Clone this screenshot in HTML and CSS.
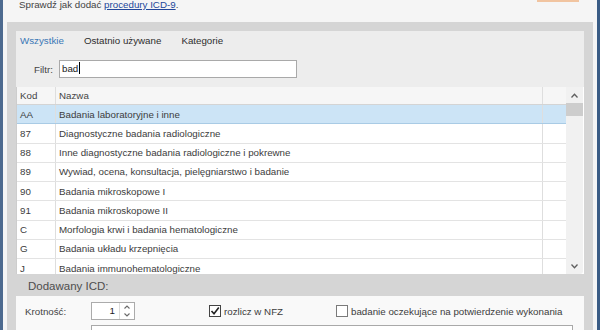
FILE: index.html
```html
<!DOCTYPE html>
<html lang="pl">
<head>
    <meta charset="UTF-8">
    <meta name="viewport" content="width=device-width, initial-scale=1.0">
    <title>Dodaj procedurę ICD-9</title>
    <link rel="stylesheet" href="styles.css">
</head>
<body>
    <div class="window">
        <div class="topbar">
            <p class="hint">Sprawdź jak dodać <a href="#">procedury ICD-9</a>.</p>
            <div class="top-button"></div>
        </div>

        <div class="frame">
            <div class="search">
                <div class="tabs">
                    <span class="tab active">Wszystkie</span>
                    <span class="tab">Ostatnio używane</span>
                    <span class="tab">Kategorie</span>
                </div>
                <div class="filter">
                    <label>Filtr:</label>
                    <div class="textbox">bad<span class="caret"></span></div>
                </div>
            </div>

            <div class="grid">
                <div class="grid-body">
                    <div class="row header">
                        <div class="cell kod">Kod</div>
                        <div class="cell nazwa">Nazwa</div>
                        <div class="cell extra"></div>
                    </div>
                    <div class="row selected">
                        <div class="cell kod">AA</div>
                        <div class="cell nazwa">Badania laboratoryjne i inne</div>
                        <div class="cell extra"></div>
                    </div>
                    <div class="row">
                        <div class="cell kod">87</div>
                        <div class="cell nazwa">Diagnostyczne badania radiologiczne</div>
                        <div class="cell extra"></div>
                    </div>
                    <div class="row">
                        <div class="cell kod">88</div>
                        <div class="cell nazwa">Inne diagnostyczne badania radiologiczne i pokrewne</div>
                        <div class="cell extra"></div>
                    </div>
                    <div class="row">
                        <div class="cell kod">89</div>
                        <div class="cell nazwa">Wywiad, ocena, konsultacja, pielęgniarstwo i badanie</div>
                        <div class="cell extra"></div>
                    </div>
                    <div class="row">
                        <div class="cell kod">90</div>
                        <div class="cell nazwa">Badania mikroskopowe I</div>
                        <div class="cell extra"></div>
                    </div>
                    <div class="row">
                        <div class="cell kod">91</div>
                        <div class="cell nazwa">Badania mikroskopowe II</div>
                        <div class="cell extra"></div>
                    </div>
                    <div class="row">
                        <div class="cell kod">C</div>
                        <div class="cell nazwa">Morfologia krwi i badania hematologiczne</div>
                        <div class="cell extra"></div>
                    </div>
                    <div class="row">
                        <div class="cell kod">G</div>
                        <div class="cell nazwa">Badania układu krzepnięcia</div>
                        <div class="cell extra"></div>
                    </div>
                    <div class="row">
                        <div class="cell kod">J</div>
                        <div class="cell nazwa">Badania immunohematologiczne</div>
                        <div class="cell extra"></div>
                    </div>
                </div>
                <div class="scrollbar">
                    <div class="sb-arrow">
                        <svg width="7" height="5" viewBox="0 0 7 5"><polyline points="0.5,4.5 3.5,1.2 6.5,4.5" fill="none" stroke="#5f5f5f" stroke-width="1.3"/></svg>
                    </div>
                    <div class="sb-track"><div class="sb-thumb"></div></div>
                    <div class="sb-arrow">
                        <svg width="7" height="5" viewBox="0 0 7 5"><polyline points="0.5,0.5 3.5,3.8 6.5,0.5" fill="none" stroke="#5f5f5f" stroke-width="1.3"/></svg>
                    </div>
                </div>
            </div>

            <div class="section-title">Dodawany ICD:</div>

            <div class="panel">
                <div class="panel-row">
                    <label class="field-label">Krotność:</label>
                    <div class="spinner">
                        <span class="spin-value">1</span>
                        <span class="spin-buttons">
                            <svg width="6" height="4" viewBox="0 0 6 4"><polyline points="0.5,3.5 3,1 5.5,3.5" fill="none" stroke="#6a6a6a" stroke-width="1.1"/></svg>
                            <svg width="6" height="4" viewBox="0 0 6 4"><polyline points="0.5,0.5 3,3 5.5,0.5" fill="none" stroke="#6a6a6a" stroke-width="1.1"/></svg>
                        </span>
                    </div>
                    <label class="check nfz">
                        <span class="box checked">
                            <svg width="10" height="10" viewBox="0 0 10 10"><polyline points="1.5,5 4,7.8 8.8,1.5" fill="none" stroke="#222" stroke-width="1.6"/></svg>
                        </span>
                        rozlicz w NFZ
                    </label>
                    <label class="check">
                        <span class="box"></span>
                        badanie oczekujące na potwierdzenie wykonania
                    </label>
                </div>
                <div class="panel-row second">
                    <label class="field-label">Opis:</label>
                    <div class="textbox wide"></div>
                </div>
            </div>
        </div>
    </div>
</body>
</html>
```

FILE: styles.css
```css
body {
    margin: 0;
    background-color: #f5f5f5;
    font-family: "Liberation Sans", Arial, sans-serif;
    font-size: 9.75px;
    color: #3c3c3c;
}

.window {
    height: 330px;
    overflow: hidden;
    border-left: 3px solid #4d6a8f;
    border-right: 3px solid #3a5c85;
}

.topbar {
    display: flex;
    height: 22px;
}

.hint {
    margin: -1px 0 0 16px;
    line-height: 12px;
    color: #444;
}

.hint a {
    color: #23479a;
}

.top-button {
    margin-left: auto;
    margin-right: 18px;
    width: 42px;
    height: 2px;
    background-color: #f1c4a0;
}

.frame {
    margin: 0 4px;
    height: 308px;
    padding: 9px 9px 0;
    background-color: #d5d5d5;
}

.search {
    height: 56px;
    padding-left: 4px;
    background-color: #ededed;
}

.tabs {
    display: flex;
    gap: 20px;
    height: 19px;
    line-height: 19px;
    color: #2e2e2e;
}

.tab.active {
    color: #3a77b6;
}

.filter {
    display: flex;
    align-items: center;
    margin-top: 10px;
    padding-left: 14px;
}

.filter label {
    width: 25px;
    color: #444;
}

.textbox {
    width: 238px;
    height: 18px;
    box-sizing: border-box;
    padding-left: 2px;
    border: 1px solid #a9a9a9;
    background-color: #fff;
    line-height: 16px;
    color: #222;
}

.caret {
    display: inline-block;
    width: 1px;
    height: 12px;
    margin-left: 1px;
    vertical-align: -2px;
    background-color: #000;
}

.grid {
    display: flex;
    height: 187px;
    border-left: 1px solid #cdcdcd;
    background-color: #fff;
}

.grid-body {
    width: 549px;
    overflow: hidden;
}

.row {
    display: flex;
    height: 19.25px;
    box-sizing: border-box;
    border-bottom: 1px solid #e3e3e3;
}

.row.header {
    height: 18px;
    background-color: #f6f6f6;
    border-bottom-color: #d4d4d4;
    color: #444;
}

.row.selected {
    background-color: #cce4f6;
    border-bottom-color: #a9cbe5;
}

.cell {
    display: flex;
    align-items: center;
    box-sizing: border-box;
    padding-left: 3px;
    white-space: nowrap;
}

.kod {
    width: 39px;
    border-right: 1px solid #dedede;
}

.nazwa {
    width: 487px;
    border-right: 1px solid #dedede;
}

.extra {
    flex: 1;
}

.scrollbar {
    display: flex;
    flex-direction: column;
    width: 17px;
    background-color: #f1f1f1;
    border-bottom-right-radius: 3px;
}

.sb-arrow {
    display: flex;
    align-items: center;
    justify-content: center;
    height: 16px;
}

.sb-track {
    flex: 1;
}

.sb-thumb {
    height: 13px;
    background-color: #cdcdcd;
}

.section-title {
    height: 22px;
    box-sizing: border-box;
    padding: 2px 0 0 12px;
    line-height: 20px;
    font-size: 11.5px;
    color: #4e4e4e;
}

.panel {
    height: 40px;
    padding: 6px 0 0 9px;
    background-color: #f9f9f9;
}

.panel-row {
    display: flex;
    align-items: center;
    height: 18px;
}

.panel-row.second {
    margin-top: 5px;
}

.field-label {
    width: 66px;
    color: #444;
}

.spinner {
    display: flex;
    width: 44px;
    height: 18px;
    box-sizing: border-box;
    border: 1px solid #ababab;
    background-color: #fff;
}

.spin-value {
    flex: 1;
    padding-right: 4px;
    text-align: right;
    line-height: 16px;
    color: #222;
}

.spin-buttons {
    display: flex;
    flex-direction: column;
    justify-content: space-around;
    align-items: center;
    width: 14px;
    border-left: 1px solid #dcdcdc;
}

.check {
    display: flex;
    align-items: center;
    gap: 3px;
    color: #3c3c3c;
}

.check.nfz {
    width: 127px;
    margin-left: 74px;
}

.box {
    display: flex;
    align-items: center;
    justify-content: center;
    width: 12px;
    height: 12px;
    box-sizing: border-box;
    border: 1px solid #7a7a7a;
    background-color: #fff;
}

.box.checked {
    border-color: #444;
}

.textbox.wide {
    width: 482px;
}
```
